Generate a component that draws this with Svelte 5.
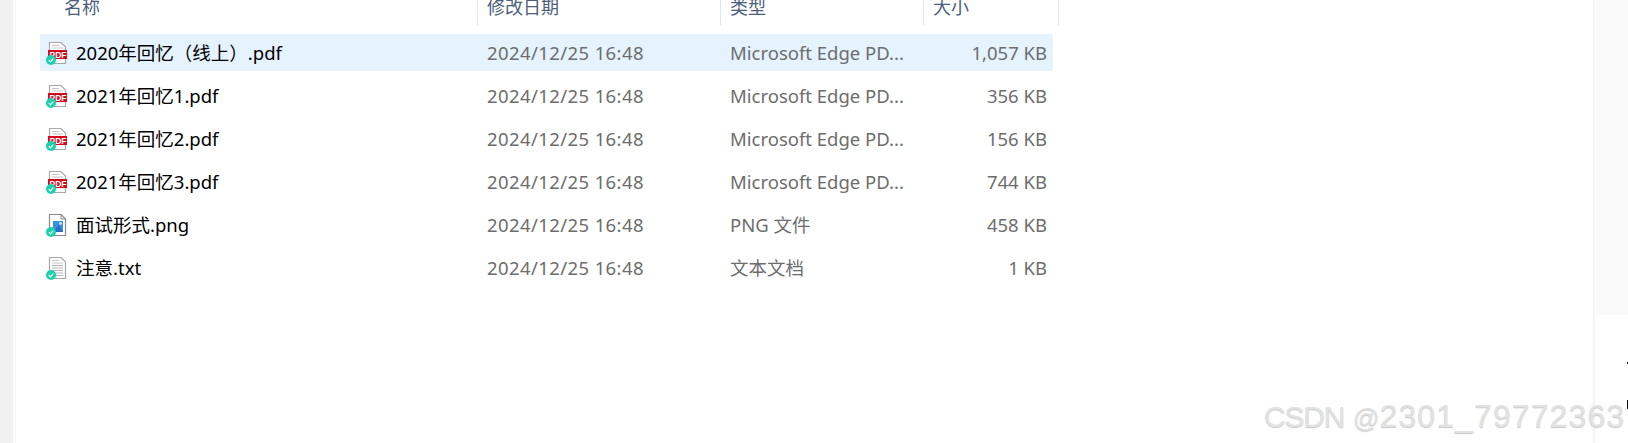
<script>
  const files = [
    { name: '2020年回忆（线上）.pdf', type: 'Microsoft Edge PD...', size: '1,057 KB', icon: 'pdf', selected: true },
    { name: '2021年回忆1.pdf', type: 'Microsoft Edge PD...', size: '356 KB', icon: 'pdf' },
    { name: '2021年回忆2.pdf', type: 'Microsoft Edge PD...', size: '156 KB', icon: 'pdf' },
    { name: '2021年回忆3.pdf', type: 'Microsoft Edge PD...', size: '744 KB', icon: 'pdf' },
    { name: '面试形式.png', type: 'PNG 文件', size: '458 KB', icon: 'png' },
    { name: '注意.txt', type: '文本文档', size: '1 KB', icon: 'txt' }
  ];
</script>

<div class="page">
  <div class="gutter"></div>
  <main class="main">
    <div class="head">
      <div class="hcell first">名称</div>
      <div class="hcell">修改日期</div>
      <div class="hcell">类型</div>
      <div class="hcell">大小</div>
    </div>
    <div class="list">
      {#each files as f}
        <div class="row" class:selected={f.selected}>
          <div class="name">
            <svg class="icon" viewBox="0 0 24 28" width="24" height="28">
              <path d="M4.5 2.5H16L20.5 7V23.5H4.5Z" fill="#fff" stroke={f.icon === 'png' ? '#8a8a8a' : '#a8a8a8'} stroke-width="1.2"/>
              {#if f.icon !== 'png'}
                <path d="M7 5.5h7M7 8h11" stroke="#c4c4c4" stroke-width="1"/>
              {:else}
                <path d="M16 2.5V7H20.5" fill="none" stroke="#8a8a8a" stroke-width="1"/>
              {/if}
              {#if f.icon === 'pdf'}
                <rect x="3" y="10" width="19" height="9" fill="#d40a1c"/>
                <text x="13" y="18" class="pdf">PDF</text>
              {:else if f.icon === 'png'}
                <rect x="8" y="9" width="10" height="11" fill="#3a8fe6"/>
                <path d="M8 20L14 12.5L18 20Z" fill="#2a6fc4"/>
                <circle cx="15.5" cy="11.5" r="1.4" fill="#cfe6fb"/>
              {:else}
                <path d="M7 10.5h11M7 13h11M7 15.5h11M7 18h11M7 20.5h11" stroke="#b4b4b4" stroke-width="1"/>
              {/if}
              <circle cx="6" cy="20" r="5" fill="#1bd1ab"/>
              <path d="M3.8 20.2L5.4 21.8L8.3 18.6" fill="none" stroke="#fff" stroke-width="1.2"/>
            </svg>
            <span>{f.name}</span>
          </div>
          <div class="cell date">2024/12/25 16:48</div>
          <div class="cell">{f.type}</div>
          <div class="cell size">{f.size}</div>
        </div>
      {/each}
    </div>
  </main>
  <aside class="side">
    <div class="panel"></div>
    <div class="marks"><i class="dash"></i><i class="bar"></i></div>
  </aside>
  <div class="watermark"><span class="wm-brand">CSDN</span> <span class="wm-at">@</span><span class="wm-id">2301_79772363</span></div>
</div>

<style>
  :global(body) { margin: 0; background: #fff; }
  .page {
    position: relative;
    display: flex;
    width: 1628px;
    height: 443px;
    overflow: hidden;
    background: #fff;
    font-family: "Noto Sans", "Noto Sans CJK SC", sans-serif;
  }
  .gutter { width: 13px; background: #f0f0f0; border-right: 2px solid #fff; }
  .main {
    flex: 1;
    border-left: 1px solid #f5f5f5;
    padding-left: 24px;
  }
  .head {
    display: grid;
    grid-template-columns: 438px 243px 203px 135px;
    height: 25px;
    margin-bottom: 9px;
    overflow: hidden;
  }
  .hcell {
    border-right: 1px solid #e6e6e6;
    padding-left: 9px;
    font-size: 18px;
    line-height: 18px;
    margin-top: -2px;
    height: 27px;
    color: #4c607a;
    box-sizing: border-box;
  }
  .hcell.first { padding-left: 24px; }
  .list { display: flex; flex-direction: column; gap: 6px; width: 1013px; }
  .row {
    display: grid;
    grid-template-columns: 437px 243px 203px 130px;
    height: 37px;
    line-height: 37px;
    align-items: center;
    font-size: 18.5px;
    border-radius: 2px;
  }
  .row.selected { background: #e5f3ff; }
  .name { display: flex; align-items: center; gap: 7px; padding-left: 5px; color: #000; }
  .icon { flex: none; margin-top: 3px; }
  .pdf { font: 700 8.5px "Liberation Sans", sans-serif; fill: #fff; text-anchor: middle; }
  .cell { padding-left: 10px; color: #6d6d6d; }
  .date { letter-spacing: 0.4px; }
  .size { text-align: right; padding: 0 6px 0 0; }
  .side {
    width: 35px;
    border-left: 2px solid #f5f5f5;
    box-sizing: border-box;
    display: flex;
    flex-direction: column;
    align-items: flex-end;
  }
  .panel { align-self: stretch; margin-left: 1px; height: 315px; background: #fafafa; }
  .marks { position: relative; flex: 1; width: 100%; }
  .dash { position: absolute; right: 0; top: 47px; width: 1px; height: 2px; background: #111; }
  .bar { position: absolute; right: 0; top: 85px; width: 1px; height: 9px; background: #111; }
  .watermark {
    position: absolute;
    left: 1264px;
    top: 398px;
    font: 32px/37px "Liberation Sans", sans-serif;
    color: #e2e2e2;
    text-shadow: 0 1px 1px #c8c8c8;
    white-space: nowrap;
  }
  .wm-brand { font-size: 30px; letter-spacing: -1.2px; }
  .wm-at { font-size: 26px; }
  .wm-id { letter-spacing: 1.1px; }
</style>
